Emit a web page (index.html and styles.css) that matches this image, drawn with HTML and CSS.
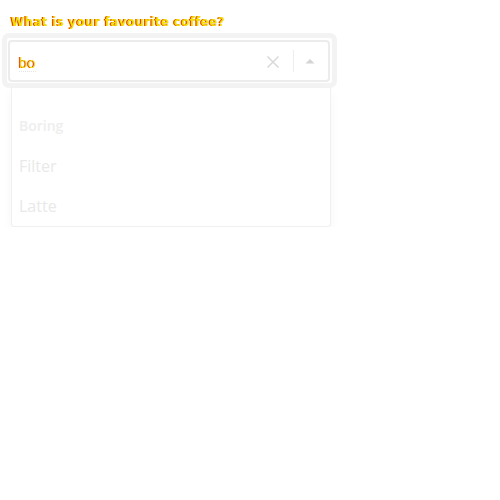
FILE: index.html
```html
<!DOCTYPE html>
<html>
<head>
<meta charset="utf-8">
<link rel="stylesheet" href="styles.css">
</head>
<body>
<div class="field">
  <label class="label">What is your favourite coffee?</label>
  <div class="ring">
    <div class="control">
      <div class="value"><span class="typed">bo</span></div>
      <div class="indicators">
        <svg class="clear" width="14" height="14" viewBox="0 0 14 14"><path d="M1.5 1.5 L12.5 12.5 M12.5 1.5 L1.5 12.5" stroke="#d9d9d9" stroke-width="1.5" fill="none"/></svg>
        <span class="sep"></span>
        <svg class="caret" width="12" height="8" viewBox="0 0 12 8"><path d="M1.5 6.5 L6 2 L10.5 6.5 Z" fill="#d4d4d4"/></svg>
      </div>
    </div>
  </div>
  <div class="menu">
    <div class="group-head">Boring</div>
    <div class="option">Filter</div>
    <div class="option">Latte</div>
  </div>
</div>
</body>
</html>
```

FILE: styles.css
```css
body {
  margin: 0;
  font-family: "Open Sans", "DejaVu Sans", sans-serif;
  background: #fff;
}
.field {
  width: 336px;
  padding: 14px 0 0 2px;
}
.label {
  display: block;
  margin-left: 9px;
  font-family: "DejaVu Sans", sans-serif;
  font-size: 12px;
  font-weight: bold;
  line-height: 16px;
  color: #f2e200;
  text-shadow: -1px 0 0 #e01010;
  letter-spacing: 0.3px;
}
.ring {
  margin-top: 3px;
  width: 335px;
  box-sizing: border-box;
  border: 5px solid #f3f3f3;
  border-radius: 7px;
  padding: 2px 2px 1px 1px;
  background: #fff;
}
.control {
  display: flex;
  align-items: center;
  height: 42px;
  box-sizing: border-box;
  border: 2px solid #ececec;
  border-radius: 4px;
  background: #fff;
  padding-left: 9px;
}
.value {
  flex: 1;
  padding-top: 1px;
}
.typed {
  display: inline-block;
  font-size: 14px;
  line-height: 17px;
  color: #f2e200;
  text-shadow: -1px 0 0 #e01010;
  border-bottom: 1px dotted #e4e4e4;
}
.indicators {
  display: flex;
  align-items: center;
  height: 100%;
}
.clear {
  margin-right: 13px;
  margin-top: 2px;
}
.sep {
  width: 1px;
  height: 22px;
  background: #eeeeee;
}
.caret {
  margin: 0 12px 0 10px;
}
.menu {
  margin-left: 9px;
  width: 320px;
  box-sizing: border-box;
  border: 1px solid #f0f0f0;
  border-top: none;
  border-radius: 0 0 4px 4px;
  background: #fff;
  box-shadow: 0 4px 10px rgba(0,0,0,0.04);
  padding-top: 18px;
}
.group-head {
  height: 40px;
  line-height: 40px;
  padding-left: 7px;
  font-size: 14px;
  font-weight: 600;
  color: #eeeeee;
}
.option {
  height: 40px;
  line-height: 40px;
  padding-left: 7px;
  font-size: 16px;
  color: #e9e9e9;
}
```
